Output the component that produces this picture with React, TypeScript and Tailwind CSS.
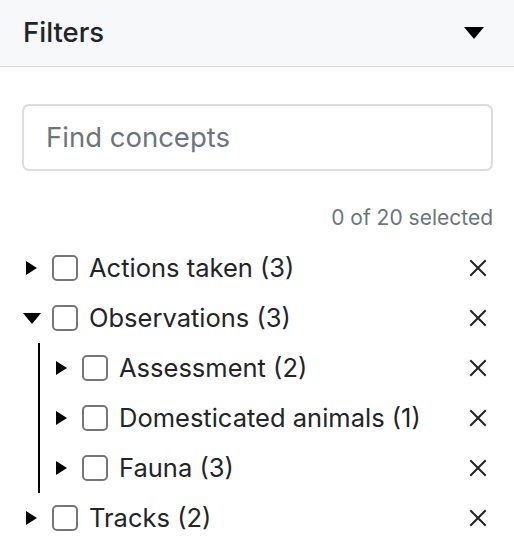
import React from "react";

const font = { fontFamily: "Inter, 'Liberation Sans', sans-serif" };

function Caret({ open }: { open: boolean }) {
  return (
    <svg width="20" height="18" viewBox="0 0 20 18" className="shrink-0">
      {open ? (
        <polygon points="1,4 19,4 10,15" fill="#000" />
      ) : (
        <polygon points="4,2 15,9 4,16" fill="#000" />
      )}
    </svg>
  );
}

function XIcon() {
  return (
    <svg width="18" height="18" viewBox="0 0 18 18" className="shrink-0 mr-[6px]">
      <path d="M2 2 L16 16 M16 2 L2 16" stroke="#222" strokeWidth="2" strokeLinecap="square" />
    </svg>
  );
}

function Row({ label, open = false }: { label: string; open?: boolean }) {
  return (
    <div className="flex h-[50px] items-center">
      <Caret open={open} />
      <div className="ml-[10px] h-[26px] w-[26px] shrink-0 rounded-[5px] border-2 border-[#767676] bg-white" />
      <span className="ml-[11px] flex-1 text-[25.5px] leading-none text-[#212529]">{label}</span>
      <XIcon />
    </div>
  );
}

export default function App() {
  return (
    <div className="w-[514px] h-[550px] bg-white overflow-hidden" style={font}>
      <div className="flex h-[67px] items-center justify-between border-b border-[#d9dadc] bg-[#f7f8fa] pl-[23px] pr-[30px]">
        <span className="text-[27.5px] font-medium text-[#212529]">Filters</span>
        <svg width="20" height="12" viewBox="0 0 20 12">
          <polygon points="0,0 20,0 10,12" fill="#000" />
        </svg>
      </div>
      <div className="pr-[21px] pl-[22px] pt-[37px]">
        <div className="flex h-[67px] items-center rounded-[7px] border-2 border-[#dadde1] pl-[22px]">
          <span className="text-[27.5px] text-[#6c757d]">Find concepts</span>
        </div>
        <div className="mt-[36px] text-right text-[21px] leading-none text-[#6c757d]">0 of 20 selected</div>
        <div className="mt-[15px]">
          <Row label="Actions taken (3)" />
          <Row label="Observations (3)" open />
          <div className="ml-[16px] border-l-2 border-black pl-[12px]">
            <Row label="Assessment (2)" />
            <Row label="Domesticated animals (1)" />
            <Row label="Fauna (3)" />
          </div>
          <Row label="Tracks (2)" />
        </div>
      </div>
    </div>
  );
}
